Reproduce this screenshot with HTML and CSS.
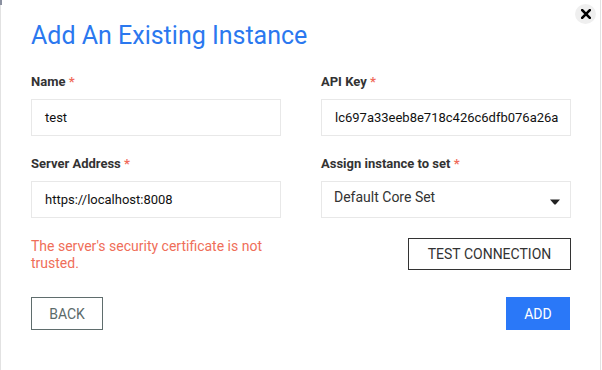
FILE: index.html
```html
<!DOCTYPE html>
<html lang="en">
<head>
  <meta charset="UTF-8" />
  <title>Add An Existing Instance</title>
  <link rel="stylesheet" href="styles.css">
</head>
<body>
  <div class="dialog">
    <button class="close" aria-label="Close">
      <svg width="10" height="10" viewBox="0 0 10 10">
        <path d="M1.2 1.2 L8.8 8.8 M8.8 1.2 L1.2 8.8" stroke="#000" stroke-width="2.6" stroke-linecap="square" />
      </svg>
    </button>

    <h1 class="title">Add An Existing Instance</h1>

    <!-- Form fields -->
    <div class="fields">
      <div class="field">
        <label class="label">Name <span class="req">*</span></label>
        <div class="input">test</div>
      </div>
      <div class="field">
        <label class="label">API Key <span class="req">*</span></label>
        <div class="input">lc697a33eeb8e718c426c6dfb076a26a</div>
      </div>
      <div class="field">
        <label class="label">Server Address <span class="req">*</span></label>
        <div class="input">https://localhost:8008</div>
      </div>
      <div class="field">
        <label class="label">Assign instance to set <span class="req">*</span></label>
        <div class="input select">
          <span class="select-text">Default Core Set</span>
          <svg class="caret" width="10" height="6" viewBox="0 0 10 6">
            <path d="M0 0.5 H10 L5.6 5.5 H4.4 Z" fill="#222" />
          </svg>
        </div>
      </div>
    </div>

    <div class="check-row">
      <div class="error">The server's security certificate is not trusted.</div>
      <button class="btn btn-dark">TEST CONNECTION</button>
    </div>

    <div class="actions">
      <button class="btn btn-gray">BACK</button>
      <button class="btn btn-primary">ADD</button>
    </div>
  </div>
</body>
</html>
```

FILE: styles.css
```css
html, body {
  margin: 0;
  padding: 0;
  background: #fff;
}

body {
  font-family: Roboto, "Liberation Sans", sans-serif;
  width: 602px;
  height: 370px;
  overflow: hidden;
}

.dialog {
  position: relative;
  box-sizing: border-box;
  width: 601px;
  height: 370px;
  border-left: 1px solid #e2e2e2;
  border-right: 1px solid #e2e2e2;
  padding: 22px 29px 0 30px;
}

.dialog::before {
  content: "";
  position: absolute;
  left: -1px;
  top: 0;
  width: 2px;
  height: 5px;
  background: #8a90a0;
}

.close {
  position: absolute;
  top: 4px;
  left: 574px;
  width: 21px;
  height: 20px;
  border: none;
  border-radius: 50%;
  background: #efefef;
  padding: 0;
  display: flex;
  align-items: center;
  justify-content: center;
  cursor: pointer;
}

.title {
  margin: 0;
  font-size: 25px;
  line-height: 28px;
  font-weight: 400;
  color: #2b78ef;
}

.fields {
  display: grid;
  grid-template-columns: 250px 250px;
  column-gap: 40px;
  row-gap: 20px;
  margin-top: 24px;
}

.field {
  display: flex;
  flex-direction: column;
  gap: 9px;
}

.label {
  font-size: 13px;
  line-height: 16px;
  font-weight: 700;
  color: #333;
}

.req {
  color: #f06b5a;
}

.input {
  box-sizing: border-box;
  height: 37px;
  border: 1px solid #e8e8e8;
  padding: 0 10px 0 13px;
  display: flex;
  align-items: center;
  font-size: 13px;
  color: #111;
  white-space: nowrap;
  overflow: hidden;
}

.select {
  justify-content: space-between;
  padding-right: 10px;
  padding-left: 12px;
}

.select-text {
  font-size: 14px;
  color: #333;
  margin-top: -5px;
}

.caret {
  margin-top: 4px;
}

.check-row {
  display: flex;
  justify-content: space-between;
  align-items: flex-start;
  margin-top: 20px;
}

.error {
  width: 250px;
  font-size: 14px;
  line-height: 17px;
  color: #ef6e59;
}

.btn {
  box-sizing: border-box;
  font-family: Roboto, "Liberation Sans", sans-serif;
  font-size: 14px;
  background: #fff;
  padding: 0 17px;
  white-space: nowrap;
  cursor: pointer;
}

.btn-dark {
  height: 32px;
  width: 163px;
  border: 1px solid #333;
  color: #333;
  padding: 0;
}

.actions {
  display: flex;
  justify-content: space-between;
  align-items: flex-start;
  margin-top: 25px;
  padding-right: 1px;
}

.btn-gray {
  height: 33px;
  width: 72px;
  border: 1px solid #5f6d6d;
  color: #5b6a6a;
}

.btn-primary {
  height: 33px;
  width: 64px;
  border: 1px solid #2a78f8;
  background: #2a78f8;
  color: #fff;
}
```
